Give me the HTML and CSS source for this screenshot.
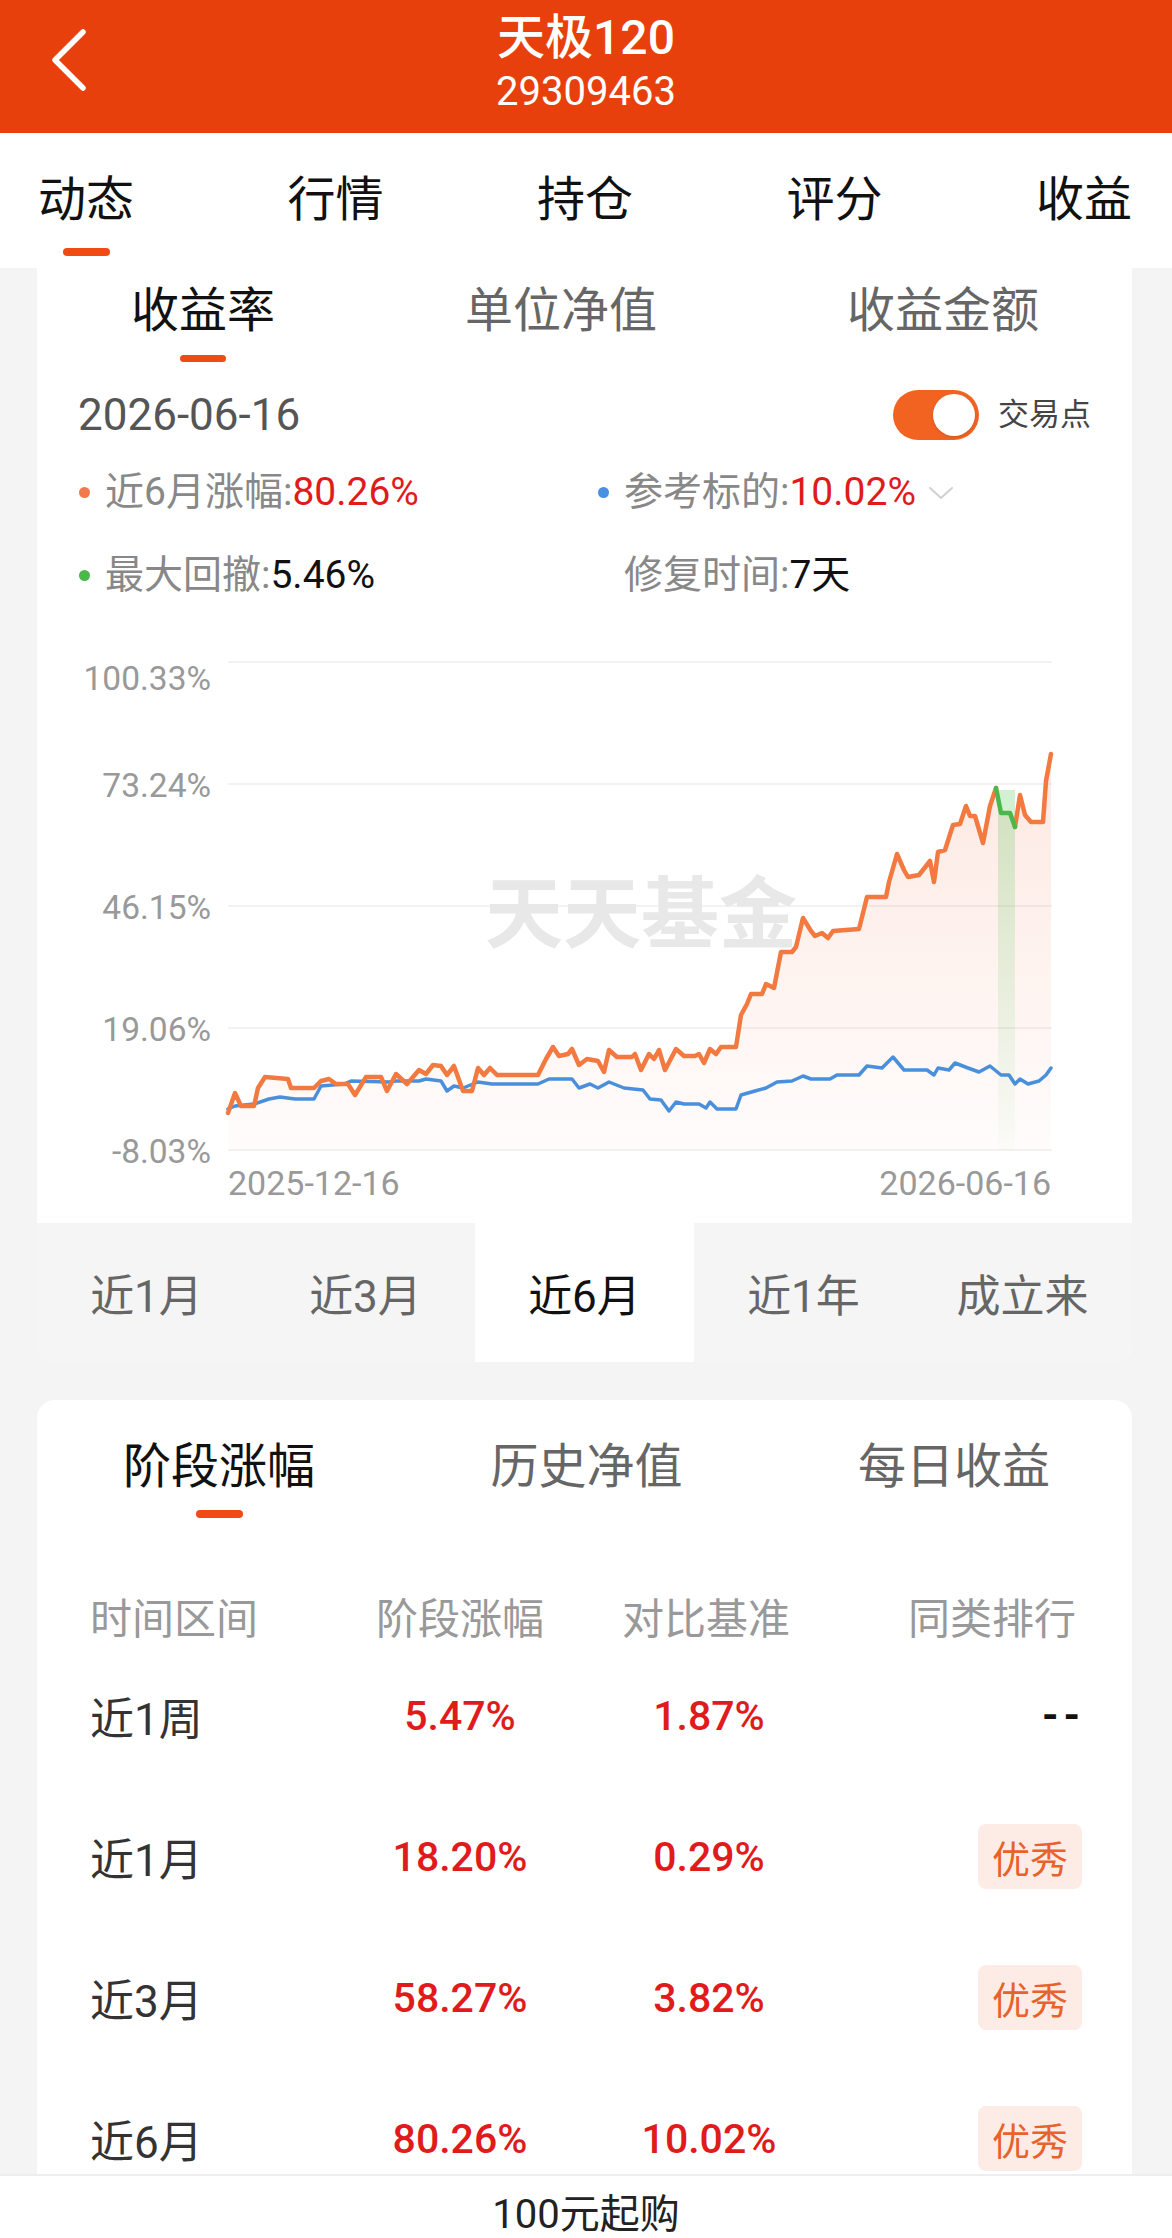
FILE: index.html
```html
<!DOCTYPE html>
<html lang="zh-CN">
<head>
<meta charset="utf-8">
<title>天极120</title>
<link rel="stylesheet" href="styles.css">
</head>
<body>
<div class="page">
  <header class="header">
    <div class="back">
      <svg width="120" height="133" viewBox="0 0 120 133"><polyline points="83,32 55,60 83,88" fill="none" stroke="#fff" stroke-width="5.5" stroke-linecap="round" stroke-linejoin="round"/></svg>
    </div>
    <div class="title-box">
      <div class="title">天极120</div>
      <div class="code">29309463</div>
    </div>
    <div></div>
  </header>

  <nav class="tabs">
    <div class="tab active"><span>动态</span><i class="bar"></i></div>
    <div class="tab"><span>行情</span></div>
    <div class="tab"><span>持仓</span></div>
    <div class="tab"><span>评分</span></div>
    <div class="tab"><span>收益</span></div>
  </nav>

  <section class="card card-top">
    <div class="subtabs subtabs-1">
      <div class="subtab active"><span>收益率</span><i class="bar"></i></div>
      <div class="subtab"><span>单位净值</span></div>
      <div class="subtab"><span>收益金额</span></div>
    </div>

    <div class="date-row">
      <div class="date">2026-06-16</div>
      <div class="trade">
        <div class="toggle"><span class="knob"></span></div>
        <span class="trade-label">交易点</span>
      </div>
    </div>

    <div class="legend">
      <div class="legend-item"><i class="dot dot-orange"></i><span class="lbl">近6月涨幅:</span><span class="val red">80.26%</span></div>
      <div class="legend-item"><i class="dot dot-blue"></i><span class="lbl">参考标的:</span><span class="val red">10.02%</span>
        <svg class="chev" width="26" height="14" viewBox="0 0 26 14"><polyline points="2,2 13,12 24,2" fill="none" stroke="#cfcfd6" stroke-width="2" stroke-linecap="round" stroke-linejoin="round"/></svg>
      </div>
      <div class="legend-item"><i class="dot dot-green"></i><span class="lbl">最大回撤:</span><span class="val dark">5.46%</span></div>
      <div class="legend-item"><i class="dot dot-none"></i><span class="lbl">修复时间:</span><span class="val dark">7天</span></div>
    </div>

    <svg class="chart" width="1095" height="618" viewBox="37 605 1095 618">
      <defs>
        <linearGradient id="fillO" x1="0" y1="0" x2="0" y2="1">
          <stop offset="0" stop-color="#f26a3c" stop-opacity="0.15"/>
          <stop offset="1" stop-color="#f26a3c" stop-opacity="0.02"/>
        </linearGradient>
        <linearGradient id="fillG" x1="0" y1="0" x2="0" y2="1">
          <stop offset="0" stop-color="#5cc85c" stop-opacity="0.28"/>
          <stop offset="1" stop-color="#5cc85c" stop-opacity="0.02"/>
        </linearGradient>
      </defs>
      <g class="grid">
        <line x1="228" y1="662" x2="1052" y2="662"/>
        <line x1="228" y1="784" x2="1052" y2="784"/>
        <line x1="228" y1="906" x2="1052" y2="906"/>
        <line x1="228" y1="1028" x2="1052" y2="1028"/>
        <line x1="228" y1="1150" x2="1052" y2="1150"/>
      </g>
      <g class="ylabels">
        <text x="211" y="678">100.33%</text>
        <text x="211" y="785">73.24%</text>
        <text x="211" y="907">46.15%</text>
        <text x="211" y="1029">19.06%</text>
        <text x="211" y="1151">-8.03%</text>
      </g>
      <text class="xlabel" x="228" y="1183">2025-12-16</text>
      <text class="xlabel end" x="1051" y="1183">2026-06-16</text>
      <text class="watermark" x="641" y="908">天天基金</text>
      <polygon fill="url(#fillO)" points="228,1113 235,1093 241,1106 254,1106 258,1088 265,1077 288,1079 291,1088 314,1088 321,1081 329,1079 336,1084 348,1084 355,1095 366,1077 381,1077 387,1091 396,1074 407,1084 419,1070 426,1074 433,1065 441,1066 447,1075 454,1066 463,1091 472,1091 478,1068 484,1075 490,1068 497,1075 538,1075 546,1059 553,1047 559,1056 568,1054 572,1049 579,1065 587,1059 598,1061 604,1072 609,1050 617,1057 632,1057 635,1054 641,1070 649,1054 654,1059 659,1050 665,1070 676,1049 684,1056 695,1056 699,1054 704,1063 710,1049 716,1054 721,1047 736,1047 741,1015 747,1004 751,994 762,994 766,984 774,988 781,952 792,952 796,947 803,918 811,931 815,936 822,933 828,938 833,931 859,929 867,897 886,897 889,882 897,854 904,870 908,877 919,875 930,861 934,882 938,852 945,850 953,825 960,824 966,806 970,816 975,816 983,843 990,806 996,788 1001,813 1010,813 1015,827 1020,795 1025,815 1031,822 1043,822 1046,781 1051,754 1051,1150 228,1150"/>
      <rect x="998" y="790" width="17" height="360" fill="url(#fillG)"/>
      <polyline class="line-blue" points="228,1109 235,1106 254,1104 269,1099 280,1097 295,1099 314,1099 321,1086 344,1084 351,1081 389,1082 396,1081 419,1081 426,1079 441,1081 447,1091 454,1086 463,1088 478,1082 492,1084 538,1084 549,1079 572,1079 579,1088 590,1084 598,1088 609,1082 624,1088 643,1090 650,1099 661,1100 669,1111 676,1102 684,1104 699,1104 706,1108 710,1102 717,1109 736,1109 741,1095 755,1091 766,1088 777,1082 792,1081 803,1076 811,1079 830,1079 837,1075 859,1075 867,1066 882,1068 893,1057 904,1070 927,1070 934,1075 938,1068 949,1070 955,1063 968,1068 979,1072 990,1066 1001,1075 1009,1075 1015,1084 1020,1079 1028,1084 1039,1081 1046,1075 1051,1068"/>
      <polyline class="line-orange" points="228,1113 235,1093 241,1106 254,1106 258,1088 265,1077 288,1079 291,1088 314,1088 321,1081 329,1079 336,1084 348,1084 355,1095 366,1077 381,1077 387,1091 396,1074 407,1084 419,1070 426,1074 433,1065 441,1066 447,1075 454,1066 463,1091 472,1091 478,1068 484,1075 490,1068 497,1075 538,1075 546,1059 553,1047 559,1056 568,1054 572,1049 579,1065 587,1059 598,1061 604,1072 609,1050 617,1057 632,1057 635,1054 641,1070 649,1054 654,1059 659,1050 665,1070 676,1049 684,1056 695,1056 699,1054 704,1063 710,1049 716,1054 721,1047 736,1047 741,1015 747,1004 751,994 762,994 766,984 774,988 781,952 792,952 796,947 803,918 811,931 815,936 822,933 828,938 833,931 859,929 867,897 886,897 889,882 897,854 904,870 908,877 919,875 930,861 934,882 938,852 945,850 953,825 960,824 966,806 970,816 975,816 983,843 990,806 996,788"/>
      <polyline class="line-orange" points="1015,827 1020,795 1025,815 1031,822 1043,822 1046,781 1051,754"/>
      <polyline class="line-green" points="996,788 1001,813 1010,813 1015,827"/>
    </svg>

    <div class="periods">
      <div class="period">近1月</div>
      <div class="period">近3月</div>
      <div class="period active">近6月</div>
      <div class="period">近1年</div>
      <div class="period">成立来</div>
    </div>
  </section>

  <section class="card card-bottom">
    <div class="subtabs subtabs-2">
      <div class="subtab active"><span>阶段涨幅</span><i class="bar"></i></div>
      <div class="subtab"><span>历史净值</span></div>
      <div class="subtab"><span>每日收益</span></div>
    </div>

    <div class="table">
      <div class="trow thead">
        <div class="c1">时间区间</div>
        <div class="c2">阶段涨幅</div>
        <div class="c3">对比基准</div>
        <div class="c4">同类排行</div>
      </div>
      <div class="trow">
        <div class="c1 name">近1周</div>
        <div class="c2 num">5.47%</div>
        <div class="c3 num">1.87%</div>
        <div class="c4 dash">--</div>
      </div>
      <div class="trow">
        <div class="c1 name">近1月</div>
        <div class="c2 num">18.20%</div>
        <div class="c3 num">0.29%</div>
        <div class="c4"><span class="badge">优秀</span></div>
      </div>
      <div class="trow">
        <div class="c1 name">近3月</div>
        <div class="c2 num">58.27%</div>
        <div class="c3 num">3.82%</div>
        <div class="c4"><span class="badge">优秀</span></div>
      </div>
      <div class="trow">
        <div class="c1 name">近6月</div>
        <div class="c2 num">80.26%</div>
        <div class="c3 num">10.02%</div>
        <div class="c4"><span class="badge">优秀</span></div>
      </div>
    </div>
  </section>

  <footer class="buybar">100元起购</footer>
</div>
</body>
</html>
```

FILE: styles.css
```css
* { box-sizing: border-box; }
html, body { margin: 0; padding: 0; }
body {
  background: #f4f4f4;
  font-family: Roboto, "Noto Sans CJK SC", sans-serif;
  color: #111;
}
.page {
  width: 1172px;
  height: 2238px;
  overflow: hidden;
}

/* header */
.header {
  height: 133px;
  background: #e8400d;
  display: grid;
  grid-template-columns: 120px 1fr 120px;
  color: #fff;
}
.back svg { display: block; }
.title-box {
  display: flex;
  flex-direction: column;
  align-items: center;
  padding-top: 10px;
}
.title {
  font-size: 48px;
  line-height: 56px;
  font-weight: 500;
}
.code {
  font-size: 40px;
  line-height: 44px;
  margin-top: 4px;
}

/* main tabs */
.tabs {
  height: 135px;
  background: #fff;
  display: flex;
  justify-content: space-between;
  align-items: flex-start;
  padding: 38px 40px 0 38px;
}
.tab {
  display: flex;
  flex-direction: column;
  align-items: center;
  font-size: 48px;
  line-height: 58px;
  color: #111;
}
.tab .bar {
  display: block;
  width: 47px;
  height: 8px;
  border-radius: 4px;
  background: #f04b13;
  margin-top: 19px;
}

/* cards */
.card {
  margin-left: 37px;
  width: 1095px;
  background: #fff;
  overflow: hidden;
}
.card-top { border-radius: 0 0 16px 16px; }
.card-bottom {
  margin-top: 38px;
  border-radius: 18px 18px 0 0;
  height: 900px;
}

.subtabs {
  display: flex;
  justify-content: space-between;
  align-items: flex-start;
}
.subtabs-1 { padding: 14px 93px 0 94px; }
.subtabs-2 { padding: 38px 82px 0 86px; }
.subtab {
  display: flex;
  flex-direction: column;
  align-items: center;
  font-size: 48px;
  line-height: 58px;
  color: #666;
}
.subtab.active { color: #111; }
.subtab .bar {
  display: block;
  width: 46px;
  height: 7px;
  border-radius: 4px;
  background: #f04b13;
  margin-top: 15px;
}
.subtabs-2 .subtab .bar { height: 8px; width: 47px; margin-top: 14px; }

/* date row */
.date-row {
  margin-top: 28px;
  height: 50px;
  padding: 0 41px;
  display: flex;
  align-items: center;
  justify-content: space-between;
}
.date {
  font-size: 44px;
  line-height: 50px;
  color: #555;
}
.trade {
  display: flex;
  align-items: center;
}
.toggle {
  width: 86px;
  height: 50px;
  border-radius: 25px;
  background: #f26322;
  display: flex;
  align-items: center;
  justify-content: flex-end;
  padding: 0 4px;
}
.knob {
  width: 42px;
  height: 42px;
  border-radius: 50%;
  background: #fff;
  box-shadow: 0 1px 3px rgba(0,0,0,0.15);
}
.trade-label {
  margin-left: 19px;
  font-size: 31px;
  line-height: 40px;
  color: #444;
}

/* legend */
.legend {
  margin-top: 22px;
  padding-left: 42px;
  display: grid;
  grid-template-columns: 519px 1fr;
  row-gap: 23px;
}
.legend-item {
  display: flex;
  align-items: center;
  height: 60px;
  font-size: 39px;
  line-height: 60px;
}
.dot {
  display: block;
  width: 11px;
  height: 11px;
  border-radius: 50%;
  margin-right: 15px;
}
.dot-orange { background: #f07a4b; }
.dot-blue { background: #4a90e2; }
.dot-green { background: #4cb84c; }
.dot-none { background: transparent; }
.lbl { color: #888; }
.val.red { color: #e01b1b; }
.val.dark { color: #111; }
.chev { margin-left: 12px; margin-top: 2px; }

/* chart */
.chart { display: block; }
.grid line { stroke: #eeeeee; stroke-width: 1.5; }
.ylabels text {
  font-family: Roboto, sans-serif;
  font-size: 33.5px;
  fill: #999;
  text-anchor: end;
  dominant-baseline: central;
}
.xlabel {
  font-family: Roboto, sans-serif;
  font-size: 34px;
  fill: #999;
  dominant-baseline: central;
}
.xlabel.end { text-anchor: end; }
.watermark {
  font-family: "Noto Sans CJK SC", sans-serif;
  font-size: 78px;
  font-weight: 700;
  fill: #e8e8e8;
  text-anchor: middle;
  dominant-baseline: central;
}
.line-orange, .line-blue, .line-green {
  fill: none;
  stroke-linejoin: round;
  stroke-linecap: round;
}
.line-orange { stroke: #f2793f; stroke-width: 4.5; }
.line-blue { stroke: #4a8fdb; stroke-width: 3.5; }
.line-green { stroke: #4cb84c; stroke-width: 4.5; }

/* periods */
.periods {
  height: 139px;
  background: #f5f5f5;
  display: grid;
  grid-template-columns: repeat(5, 1fr);
}
.period {
  display: flex;
  align-items: center;
  justify-content: center;
  font-size: 44px;
  color: #666;
}
.period.active {
  background: #fff;
  color: #111;
}

/* table */
.table {
  margin-top: 67px;
  padding: 0 52px 0 53px;
}
.trow {
  display: grid;
  grid-template-columns: 270px 200px 298px 222px;
  align-items: center;
  height: 141px;
}
.trow.thead {
  height: 60px;
  font-size: 42px;
  color: #999;
}
.thead .c2, .thead .c3 { text-align: center; }
.thead .c3 { padding-right: 6px; }
.thead .c4 { text-align: right; padding-right: 4px; }
.name {
  font-size: 44px;
  color: #333;
}
.num {
  text-align: center;
  font-size: 41px;
  font-weight: 500;
  color: #e01b1b;
}
.c4 {
  display: flex;
  justify-content: flex-end;
}
.dash {
  font-size: 42px;
  color: #111;
  font-weight: 700;
  letter-spacing: 5px;
  margin-right: -5px;
}
.badge {
  display: flex;
  align-items: center;
  justify-content: center;
  width: 104px;
  height: 65px;
  border-radius: 8px;
  background: #fdece5;
  color: #e8622c;
  font-size: 38px;
  margin-right: -2px;
}

/* bottom buy bar */
.buybar {
  position: fixed;
  left: 0;
  right: 0;
  bottom: 0;
  height: 64px;
  background: #fff;
  border-top: 2px solid #eeeeee;
  text-align: center;
  font-size: 40px;
  line-height: 40px;
  padding-top: 19px;
  color: #222;
}
```
